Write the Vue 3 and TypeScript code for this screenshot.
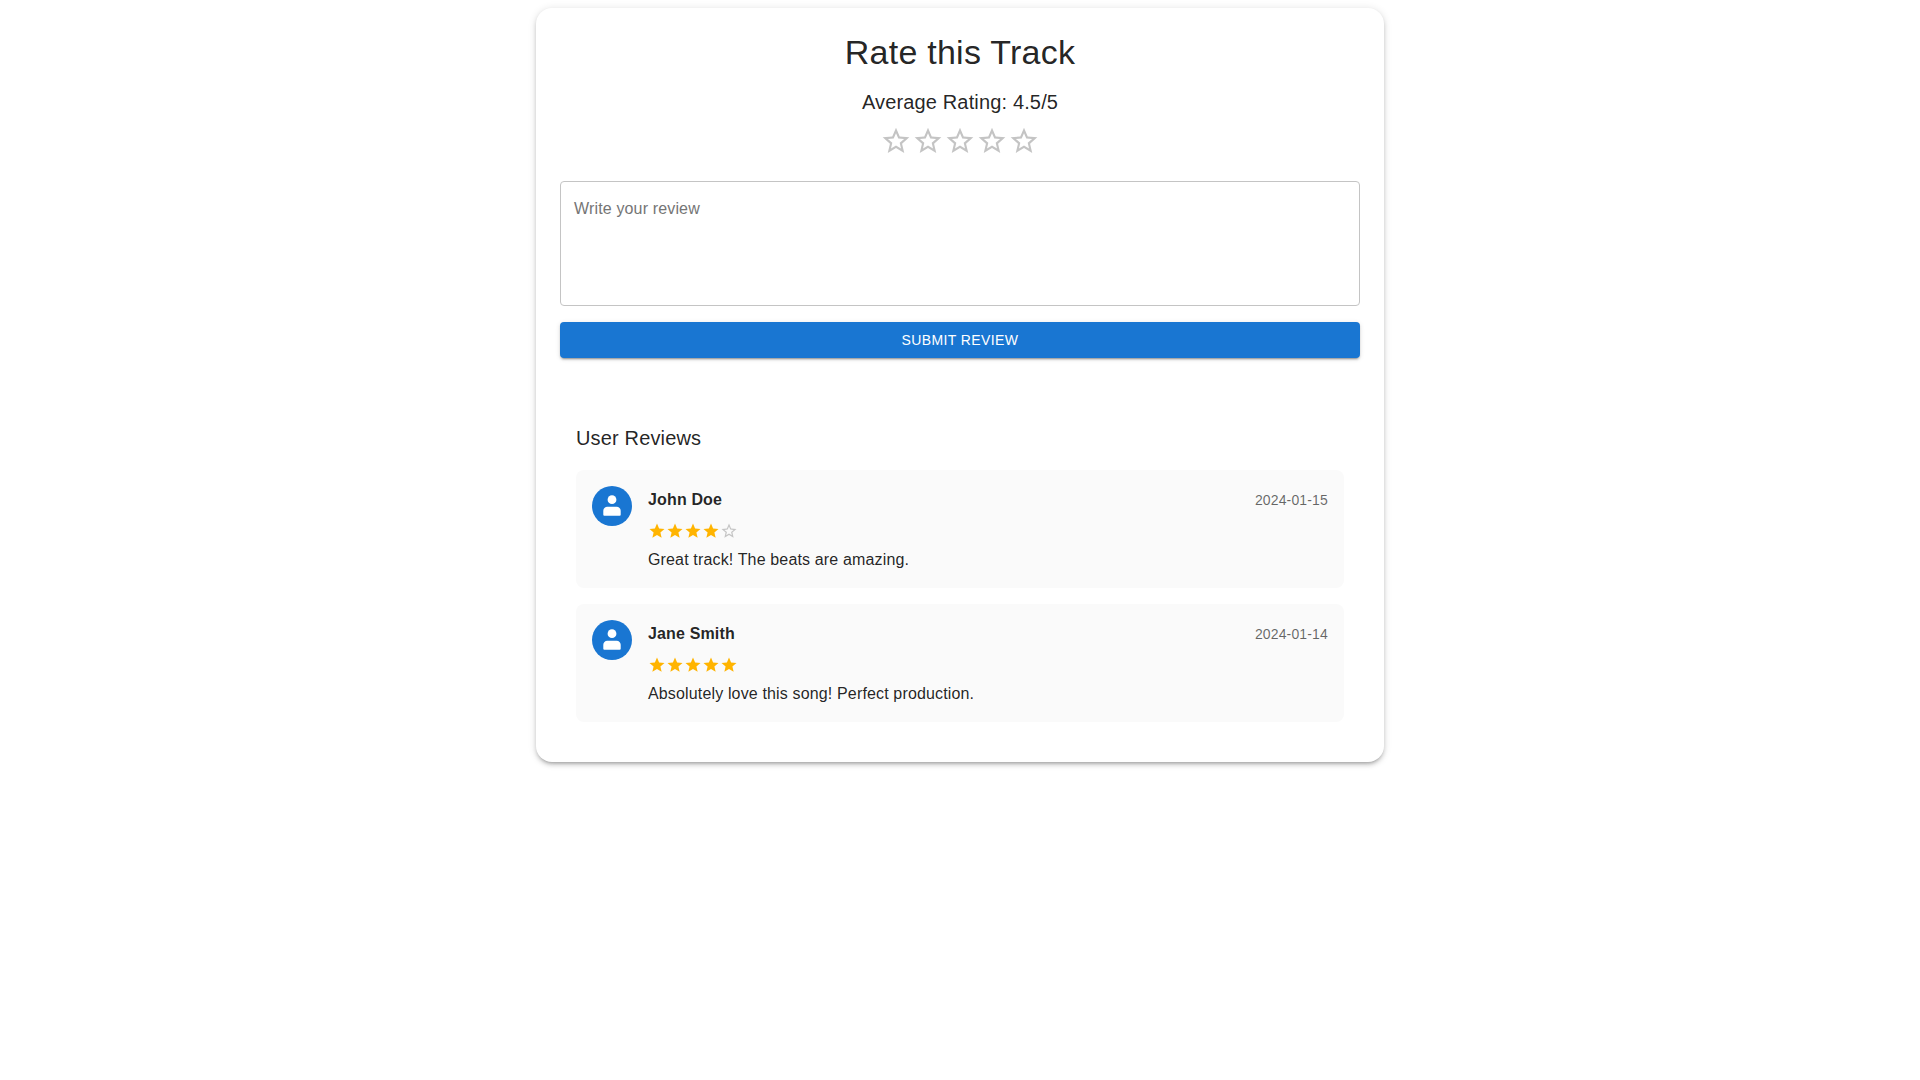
<script setup lang="ts">
interface Review { name: string; date: string; rating: number; text: string }
const reviews: Review[] = [
  { name: 'John Doe', date: '2024-01-15', rating: 4, text: 'Great track! The beats are amazing.' },
  { name: 'Jane Smith', date: '2024-01-14', rating: 5, text: 'Absolutely love this song! Perfect production.' }
]
const outline = 'M22 9.24l-7.19-.62L12 2 9.19 8.63 2 9.24l5.46 4.73L5.82 21 12 17.27 18.18 21l-1.63-7.03L22 9.24zM12 15.4l-3.76 2.27 1-4.28-3.32-2.88 4.38-.38L12 6.1l1.71 4.04 4.38.38-3.32 2.88 1 4.28L12 15.4z'
const filled = 'M12 17.27 18.18 21l-1.64-7.03L22 9.24l-7.19-.61L12 2 9.19 8.63 2 9.24l5.46 4.73L5.82 21z'
</script>

<template>
  <div class="page">
    <main class="card">
      <h1 class="title">Rate this Track</h1>
      <h2 class="average">Average Rating: 4.5/5</h2>
      <div class="rating">
        <svg v-for="n in 5" :key="n" class="star-lg" viewBox="0 0 24 24"><path :d="outline" /></svg>
      </div>
      <div class="field">
        <textarea class="input" placeholder="Write your review" rows="4"></textarea>
      </div>
      <button class="submit" type="button">Submit Review</button>
      <section class="reviews">
        <h3 class="reviews-title">User Reviews</h3>
        <article v-for="r in reviews" :key="r.name" class="review">
          <div class="avatar">
            <svg viewBox="0 0 24 24" width="24" height="24">
              <circle cx="12" cy="5.700" r="4.400" fill="#fff" />
              <path d="M3.300 16.700c0-2.200 1.800-4 4-4h9.400c2.200 0 4 1.800 4 4v4a1 1 0 0 1-1 1H4.300a1 1 0 0 1-1-1z" fill="#fff" />
            </svg>
          </div>
          <div class="body">
            <div class="head">
              <span class="name">{{ r.name }}</span>
              <span class="date">{{ r.date }}</span>
            </div>
            <div class="mini-stars">
              <svg v-for="n in 5" :key="n" class="star-sm" :class="{ on: n <= r.rating }" viewBox="0 0 24 24">
                <path :d="n <= r.rating ? filled : outline" />
              </svg>
            </div>
            <p class="text">{{ r.text }}</p>
          </div>
        </article>
      </section>
    </main>
  </div>
</template>

<style>
html, body { margin: 0; background: #fff; }
</style>

<style scoped>
.page {
  box-sizing: border-box;
  min-height: 100vh;
  padding-top: 8px;
}
.card {
  box-sizing: border-box;
  width: 848px;
  margin: 0 auto;
  padding: 23px 24px 24px;
  background: #fff;
  border-radius: 16px;
  box-shadow: 0 3px 3px -2px rgba(0,0,0,.2), 0 3px 4px 0 rgba(0,0,0,.14), 0 1px 8px 0 rgba(0,0,0,.12);
  font-family: "Liberation Sans", Arial, sans-serif;
  color: rgba(0,0,0,.87);
}
.title {
  margin: 0 0 13px;
  font-size: 34px;
  font-weight: 400;
  line-height: 42px;
  letter-spacing: .25px;
  text-align: center;
}
.average {
  margin: 0 0 7px;
  font-size: 20px;
  font-weight: 400;
  line-height: 32px;
  letter-spacing: .15px;
  text-align: center;
}
.rating { display: flex; justify-content: center; margin-bottom: 24px; }
.star-lg { display: block; width: 32px; height: 32px; fill: #c4c4c4; }
.field { display: flex; }
.input {
  box-sizing: border-box;
  width: 100%;
  height: 125px;
  padding: 14.5px 13px;
  border: 1px solid #c4c4c4;
  border-radius: 4px;
  font: 400 16px/23px "Liberation Sans", Arial, sans-serif;
  letter-spacing: .15px;
  color: rgba(0,0,0,.87);
  resize: none;
  outline: none;
}
.input::placeholder { color: #757575; opacity: 1; }
.submit {
  display: block;
  width: 100%;
  height: 36px;
  margin-top: 16px;
  border: 0;
  border-radius: 4px;
  background: #1976d2;
  color: #fff;
  font: 500 14px/24px "Liberation Sans", Arial, sans-serif;
  letter-spacing: .4px;
  text-transform: uppercase;
  box-shadow: 0 3px 1px -2px rgba(0,0,0,.2), 0 2px 2px 0 rgba(0,0,0,.14), 0 1px 5px 0 rgba(0,0,0,.12);
}
.reviews { margin-top: 48px; padding: 16px; }
.reviews-title {
  margin: 0 0 16px;
  font-size: 20px;
  font-weight: 400;
  line-height: 32px;
  letter-spacing: .15px;
}
.review {
  display: flex;
  gap: 16px;
  padding: 16px;
  margin-bottom: 16px;
  background: #fafafa;
  border-radius: 8px;
}
.review:last-child { margin-bottom: 0; }
.avatar {
  flex: none;
  display: flex;
  align-items: center;
  justify-content: center;
  width: 40px;
  height: 40px;
  border-radius: 50%;
  background: #1976d2;
}
.body { flex: 1; min-width: 0; }
.head { display: flex; justify-content: space-between; align-items: center; height: 28px; }
.name { font-size: 16px; font-weight: 700; line-height: 24px; letter-spacing: .15px; }
.date { font-size: 14px; line-height: 20px; letter-spacing: .15px; color: rgba(0,0,0,.6); }
.mini-stars { display: flex; margin: 8px 0 8px; }
.star-sm { display: block; width: 18px; height: 18px; fill: #c4c4c4; }
.star-sm.on { fill: #ffb400; }
.text { margin: 0; font-size: 16px; line-height: 24px; letter-spacing: .15px; }
</style>
